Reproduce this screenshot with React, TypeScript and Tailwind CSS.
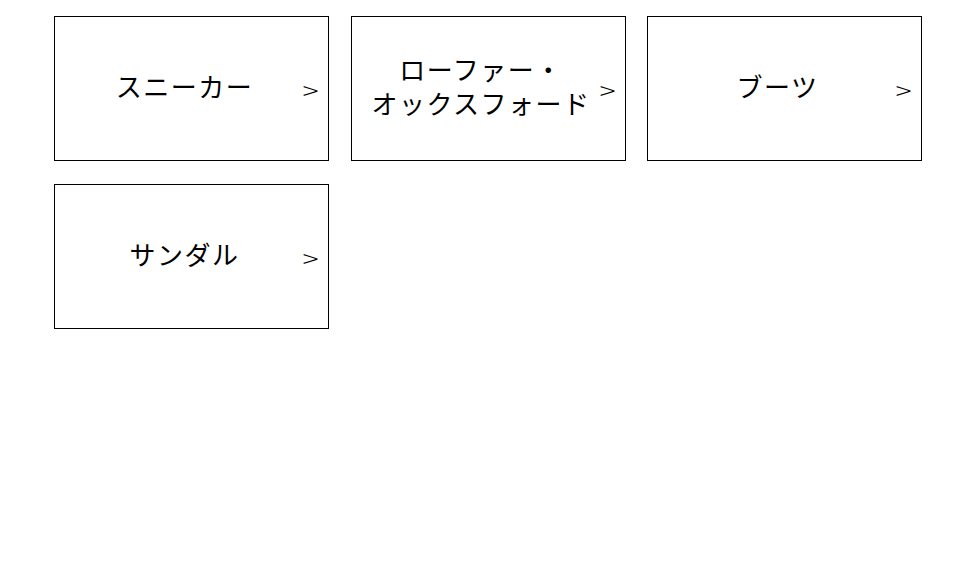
const categories = [
  { name: "スニーカー" },
  { name: "ローファー・", name2: "オックスフォード" },
  { name: "ブーツ" },
  { name: "サンダル" },
];

function CategoryCard({ name, name2 }: { name: string; name2?: string }) {
  return (
    <a
      href="#"
      className="relative flex h-[145px] items-center justify-center border border-black bg-white pr-[14px] text-black"
    >
      <span className="-mt-[5px] text-center text-[26px] font-normal leading-[34px] tracking-[1.5px]">
        {name}
        {name2 && (
          <>
            <br />
            {name2}
          </>
        )}
      </span>
      <span className="absolute right-[11px] top-1/2 -translate-y-[44%] scale-x-125 text-[24px] font-light leading-none">
        &gt;
      </span>
    </a>
  );
}

export default function App() {
  return (
    <div
      className="min-h-[582px] bg-white pt-4"
      style={{ fontFamily: '"Noto Sans CJK JP", "Noto Sans", sans-serif' }}
    >
      <div className="ml-[54px] grid w-[868px] grid-cols-3 gap-x-[21.5px] gap-y-[23px]">
        {categories.map((c) => (
          <CategoryCard key={c.name} name={c.name} name2={c.name2} />
        ))}
      </div>
    </div>
  );
}
